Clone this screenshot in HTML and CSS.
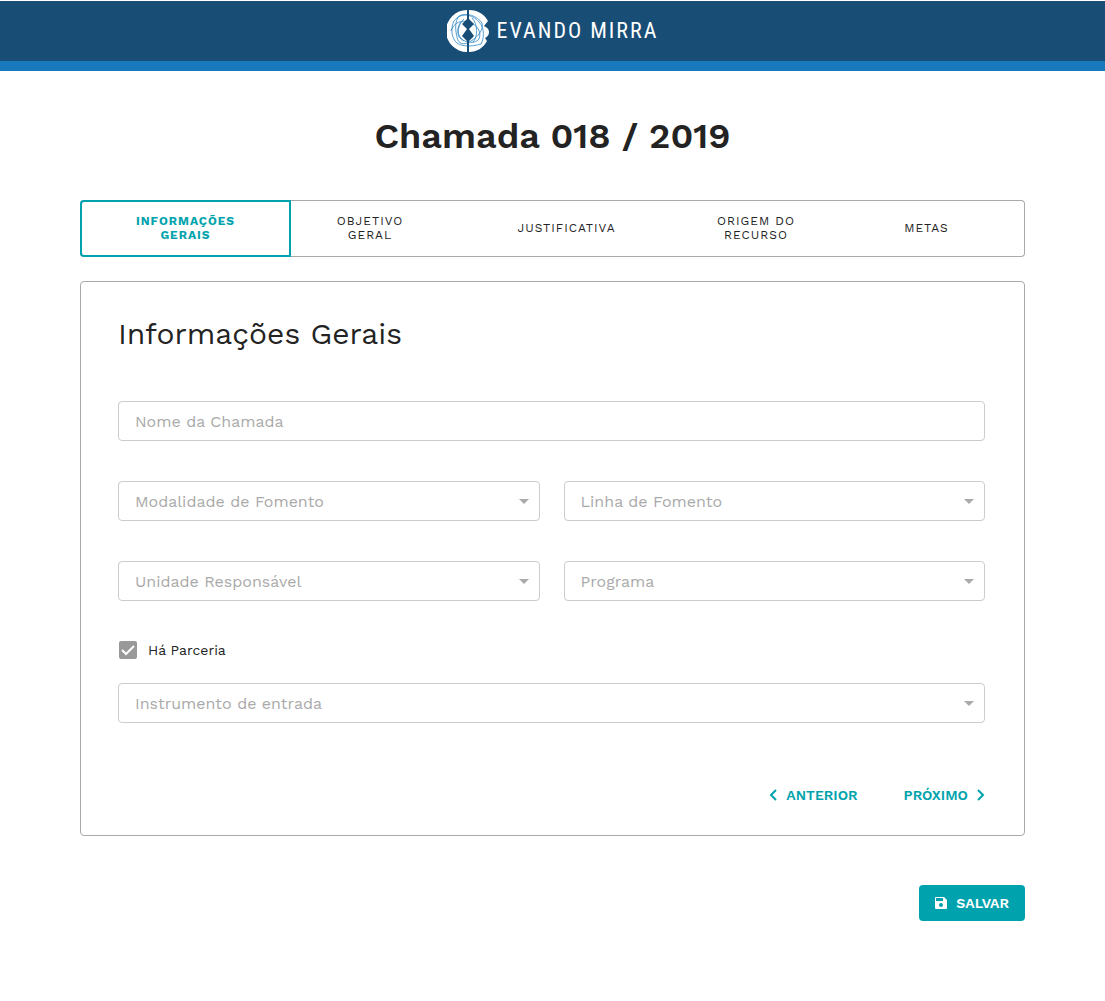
FILE: index.html
```html
<!DOCTYPE html>
<html lang="pt-BR">
<head>
<meta charset="utf-8">
<meta name="viewport" content="width=device-width, initial-scale=1">
<title>Chamada 018 / 2019 - Evando Mirra</title>
<link rel="stylesheet" href="styles.css">
</head>
<body>
<header class="topbar">
  <a class="brand" href="#">
    <svg class="brand-mark" viewBox="0 0 42 42" aria-hidden="true">
      <path class="mark-disc" d="M20 0A21 21 0 0 0 20 42ZM22 0C31 0 37 4 41 11L37 16Q42 18 42 22Q42 26 38 28L40 31C36 38 30 42 22 42Z"/>
      <path class="mark-line" d="M7 11C14 2 25 4 32 12C38 18 37 29 34 34C25 37 12 37 8 31C4 25 4 17 7 11Z"/>
      <path class="mark-line" d="M12 6C20 2 30 6 35 13C37 19 31 27 24 31C17 36 11 34 10 27C8 19 8 11 12 6Z"/>
      <path class="mark-line" d="M4 21C7 12 15 10 21 12C30 14 35 22 32 29C28 34 20 33 14 29C8 25 12 13 17 9"/>
      <path class="mark-line" d="M25 8C31 14 31 27 26 32M14 12C9 18 10 26 17 31"/>
      <path class="mark-core" d="M22 0V9L27 14L22 19L27 26L22 31V42H20V31L15 26L20 19L15 14L20 9V0Z"/>
    </svg>
    <span class="brand-name">EVANDO MIRRA</span>
  </a>
</header>
<main class="page">
  <h1 class="page-title">Chamada 018 / 2019</h1>
  <nav class="tabs" aria-label="Etapas da chamada">
    <a class="tab tab-active" href="#" aria-current="step">INFORMAÇÕES<br>GERAIS</a>
    <a class="tab" href="#">OBJETIVO<br>GERAL</a>
    <a class="tab" href="#">JUSTIFICATIVA</a>
    <a class="tab" href="#">ORIGEM DO<br>RECURSO</a>
    <a class="tab" href="#">METAS</a>
  </nav>
  <form class="form">
    <section class="panel">
      <h2 class="panel-title">Informações Gerais</h2>
      <div class="fields">
        <input class="control wide" type="text" placeholder="Nome da Chamada" aria-label="Nome da Chamada">
        <div class="picker">
          <select class="control" aria-label="Modalidade de Fomento"><option>Modalidade de Fomento</option></select>
          <svg class="caret" viewBox="0 0 10 5" aria-hidden="true"><path d="M0 0H10L5 5Z"/></svg>
        </div>
        <div class="picker">
          <select class="control" aria-label="Linha de Fomento"><option>Linha de Fomento</option></select>
          <svg class="caret" viewBox="0 0 10 5" aria-hidden="true"><path d="M0 0H10L5 5Z"/></svg>
        </div>
        <div class="picker">
          <select class="control" aria-label="Unidade Responsável"><option>Unidade Responsável</option></select>
          <svg class="caret" viewBox="0 0 10 5" aria-hidden="true"><path d="M0 0H10L5 5Z"/></svg>
        </div>
        <div class="picker">
          <select class="control" aria-label="Programa"><option>Programa</option></select>
          <svg class="caret" viewBox="0 0 10 5" aria-hidden="true"><path d="M0 0H10L5 5Z"/></svg>
        </div>
      </div>
      <div class="partner">
        <label class="check">
          <span class="check-box">
            <input class="check-input" type="checkbox" checked>
            <svg class="check-mark" viewBox="0 0 18 18" aria-hidden="true"><path d="M3 9L7 13L15 5"/></svg>
          </span>
          <span>Há Parceria</span>
        </label>
        <div class="picker">
          <select class="control" aria-label="Instrumento de entrada"><option>Instrumento de entrada</option></select>
          <svg class="caret" viewBox="0 0 10 5" aria-hidden="true"><path d="M0 0H10L5 5Z"/></svg>
        </div>
      </div>
      <div class="pager">
        <button class="step" type="button">
          <svg class="chevron" viewBox="0 0 8 12" aria-hidden="true"><path d="M7 1L2 6L7 11"/></svg>
          ANTERIOR
        </button>
        <button class="step" type="button">
          PRÓXIMO
          <svg class="chevron" viewBox="0 0 8 12" aria-hidden="true"><path d="M1 1L6 6L1 11"/></svg>
        </button>
      </div>
    </section>
    <button class="save" type="submit">
      <svg class="save-icon" viewBox="0 0 12 12" aria-hidden="true"><path fill-rule="evenodd" d="M1 0H9L12 3V11Q12 12 11 12H1Q0 12 0 11V1Q0 0 1 0ZM1 1V4H8V1ZM6 6A2 2 0 1 0 6 10A2 2 0 1 0 6 6Z"/></svg>
      SALVAR
    </button>
  </form>
</main>
</body>
</html>
```
FILE: styles.css
```css
* { box-sizing: border-box; }

body {
  margin: 0;
  background: #fff;
  color: #232323;
  font-family: "Work Sans", Inter, "Liberation Sans", sans-serif;
}

.topbar {
  display: flex;
  justify-content: center;
  align-items: center;
  height: 70px;
  margin-top: 1px;
  background: #184d76;
  border-bottom: 10px solid #187abd;
}

.brand {
  display: flex;
  align-items: center;
  gap: 8px;
  color: #fff;
  text-decoration: none;
}

.brand-mark { width: 42px; height: 42px; }
.mark-disc { fill: #fff; }
.mark-core { fill: #184d76; }
.mark-line { fill: none; stroke: #2f86c4; stroke-width: 0.8; }

.brand-name {
  font-family: "Roboto Condensed", Roboto, sans-serif;
  font-size: 22px;
  line-height: 24px;
  letter-spacing: 2px;
}

.page { padding: 41px 80px 80px; }

.page-title {
  margin: 0 0 39px;
  font-size: 36px;
  font-weight: 600;
  line-height: 49px;
  text-align: center;
}

.tabs {
  display: grid;
  grid-template-columns: 211fr 158fr 235fr 144fr 197fr;
  height: 57px;
  margin-bottom: 24px;
  border-radius: 4px;
  box-shadow: inset 0 0 0 1px #aaa;
}

.tab {
  display: flex;
  justify-content: center;
  align-items: center;
  padding-bottom: 2px;
  color: #232323;
  font-size: 12px;
  line-height: 14px;
  letter-spacing: 1px;
  text-align: center;
  text-decoration: none;
}

.tab-active {
  border: 2px solid #00a3ad;
  border-radius: 4px 0 0 4px;
  color: #00a3ad;
  font-weight: 700;
}

.form {
  display: flex;
  flex-direction: column;
  align-items: flex-end;
  gap: 49px;
}

.panel {
  width: 100%;
  padding: 32px 39px 28px 37px;
  border: 1px solid #aaa;
  border-radius: 4px;
}

.panel-title {
  margin: 0 0 47px;
  font-size: 30px;
  font-weight: 400;
  line-height: 40px;
}

.fields {
  display: grid;
  grid-template-columns: 1fr 1fr;
  gap: 40px 24px;
}

.wide { grid-column: 1 / -1; }

.control {
  display: block;
  width: 100%;
  height: 40px;
  padding: 0 16px;
  appearance: none;
  background: #fff;
  border: 1px solid #ccc;
  border-radius: 4px;
  color: #aaa;
  font-family: inherit;
  font-size: 16px;
}

.control::placeholder { color: #aaa; opacity: 1; }

.picker { position: relative; }

.caret {
  position: absolute;
  top: 18px;
  right: 11px;
  width: 10px;
  height: 5px;
  fill: #aaa;
  pointer-events: none;
}

.partner {
  display: grid;
  gap: 23px;
  margin-top: 39px;
}

.check {
  display: flex;
  align-items: center;
  gap: 11px;
  padding-left: 1px;
  font-size: 14px;
  line-height: 20px;
}

.check-box { display: grid; }
.check-box > * { grid-area: 1 / 1; }

.check-input {
  width: 18px;
  height: 18px;
  margin: 0;
  appearance: none;
  background: #fff;
  border: 2px solid #999;
  border-radius: 2px;
}

.check-input:checked { background: #999; }

.check-mark {
  width: 18px;
  height: 18px;
  fill: none;
  stroke: #fff;
  stroke-width: 2;
  pointer-events: none;
}

.pager {
  display: flex;
  justify-content: flex-end;
  gap: 46px;
  margin-top: 60px;
}

.step {
  display: flex;
  align-items: center;
  gap: 9px;
  padding: 0;
  background: none;
  border: 0;
  color: #00a3ad;
  font-family: inherit;
  font-size: 14px;
  font-weight: 600;
  line-height: 24px;
}

.chevron {
  width: 8px;
  height: 12px;
  fill: none;
  stroke: #00a3ad;
  stroke-width: 2;
}

.save {
  display: flex;
  justify-content: center;
  align-items: center;
  gap: 9px;
  height: 36px;
  padding: 0 16px;
  background: #00a3ad;
  border: 0;
  border-radius: 4px;
  color: #fff;
  font-family: inherit;
  font-size: 14px;
  font-weight: 600;
}

.save-icon { width: 12px; height: 12px; fill: #fff; }
```
